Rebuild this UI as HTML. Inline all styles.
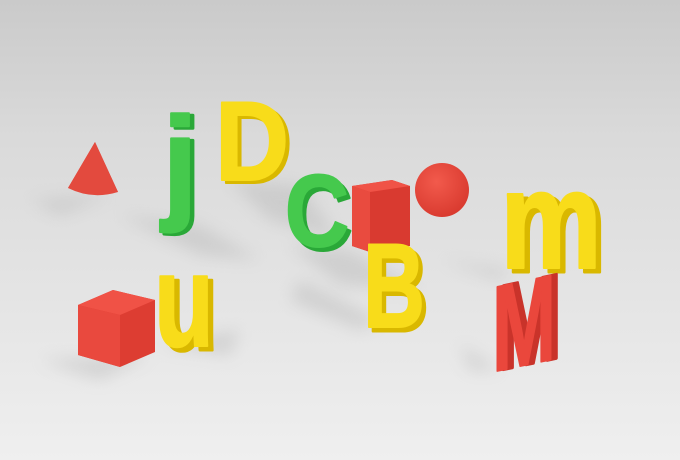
<!DOCTYPE html>
<html><head><meta charset="utf-8"><style>
html,body{margin:0;padding:0;width:680px;height:460px;overflow:hidden}
text{font-weight:bold;stroke-linejoin:round}
</style></head><body>
<svg width="680" height="460" viewBox="0 0 680 460" xmlns="http://www.w3.org/2000/svg" font-family="Liberation Sans, sans-serif">
<defs>
<linearGradient id="bg" x1="0" y1="0" x2="0" y2="1">
<stop offset="0" stop-color="#cacaca"/><stop offset="0.3" stop-color="#dadada"/><stop offset="1" stop-color="#efefef"/>
</linearGradient>
<radialGradient id="sph" cx="0.4" cy="0.35" r="0.7"><stop offset="0" stop-color="#f25a4c"/><stop offset="1" stop-color="#d8392e"/></radialGradient>
<filter id="bl"><feGaussianBlur stdDeviation="8"/></filter>
</defs>
<rect width="680" height="460" fill="url(#bg)"/>
<g fill="#b8b8b8" opacity="0.45" filter="url(#bl)">
<path d="M30 200 L110 195 L60 215Z"/>
<path d="M120 215 L200 225 L260 260 L200 255Z"/>
<path d="M230 180 L300 185 L340 240 L270 220Z"/>
<path d="M290 245 L350 250 L420 290 L340 285Z"/>
<path d="M300 280 L380 320 L360 330 L290 300Z"/>
<path d="M40 360 L150 355 L100 380Z"/>
<path d="M160 345 L240 330 L230 355Z"/>
<path d="M440 260 L510 270 L500 280Z"/>
<path d="M460 345 L500 370 L470 370Z"/>
</g>
<polygon points="95,142 68,188 118,192" fill="#e8463a"/>
<path d="M68,188 Q92,200 118,192 L95,142Z" fill="#e34a3e"/>
<!-- j -->
<text x="166" y="208" font-size="128" fill="#2aa838" stroke="#2aa838" stroke-width="3" textLength="36" lengthAdjust="spacingAndGlyphs">j</text>
<text x="162" y="206" font-size="128" fill="#45c94d" stroke="#45c94d" stroke-width="2" textLength="36" lengthAdjust="spacingAndGlyphs">j</text>
<!-- D -->
<text x="219" y="183" font-size="112" fill="#d9b800" stroke="#d9b800" stroke-width="2" textLength="74" lengthAdjust="spacingAndGlyphs">D</text>
<text x="215" y="180" font-size="112" fill="#f8dc1a" stroke="#f8dc1a" stroke-width="2" textLength="74" lengthAdjust="spacingAndGlyphs">D</text>
<!-- C -->
<text x="289" y="250" font-size="102" fill="#2aa838" stroke="#2aa838" stroke-width="2" textLength="64" lengthAdjust="spacingAndGlyphs">C</text>
<text x="285" y="246" font-size="102" fill="#45c94d" stroke="#45c94d" stroke-width="2" textLength="64" lengthAdjust="spacingAndGlyphs">C</text>
<polygon points="352,186 392,180 410,186 410,246 370,252 352,246" fill="#d93a30"/>
<polygon points="352,186 392,180 410,186 370,192" fill="#f05347"/>
<polygon points="352,186 370,192 370,252 352,246" fill="#e94b3f"/>
<circle cx="442" cy="190" r="27" fill="url(#sph)"/>
<!-- m -->
<text x="505" y="272" font-size="140" fill="#d9b800" stroke="#d9b800" stroke-width="3" textLength="102" lengthAdjust="spacingAndGlyphs">m</text>
<text x="500" y="268" font-size="140" fill="#f8dc1a" stroke="#f8dc1a" stroke-width="2" textLength="102" lengthAdjust="spacingAndGlyphs">m</text>
<polygon points="78,305 113,290 155,300 155,352 120,367 78,355" fill="#dd3d32"/>
<polygon points="78,305 113,290 155,300 120,315" fill="#f05246"/>
<polygon points="78,305 120,315 120,367 78,355" fill="#e9493e"/>
<!-- u -->
<text x="159" y="350" font-size="132" fill="#d9b800" stroke="#d9b800" stroke-width="3" textLength="60" lengthAdjust="spacingAndGlyphs">u</text>
<text x="154" y="346" font-size="132" fill="#f8dc1a" stroke="#f8dc1a" stroke-width="2" textLength="60" lengthAdjust="spacingAndGlyphs">u</text>
<!-- B -->
<text x="367" y="331" font-size="120" fill="#d9b800" stroke="#d9b800" stroke-width="3" textLength="62" lengthAdjust="spacingAndGlyphs">B</text>
<text x="363" y="327" font-size="120" fill="#f8dc1a" stroke="#f8dc1a" stroke-width="2" textLength="62" lengthAdjust="spacingAndGlyphs">B</text>
<g transform="translate(492,372) skewY(-12)">
<text x="6" y="0" font-size="122" fill="#c9332a" stroke="#c9332a" stroke-width="3" textLength="64" lengthAdjust="spacingAndGlyphs">M</text>
<text x="0" y="0" font-size="122" fill="#ea473c" stroke="#ea473c" stroke-width="2" textLength="64" lengthAdjust="spacingAndGlyphs">M</text>
</g>
</svg>
</body></html>
